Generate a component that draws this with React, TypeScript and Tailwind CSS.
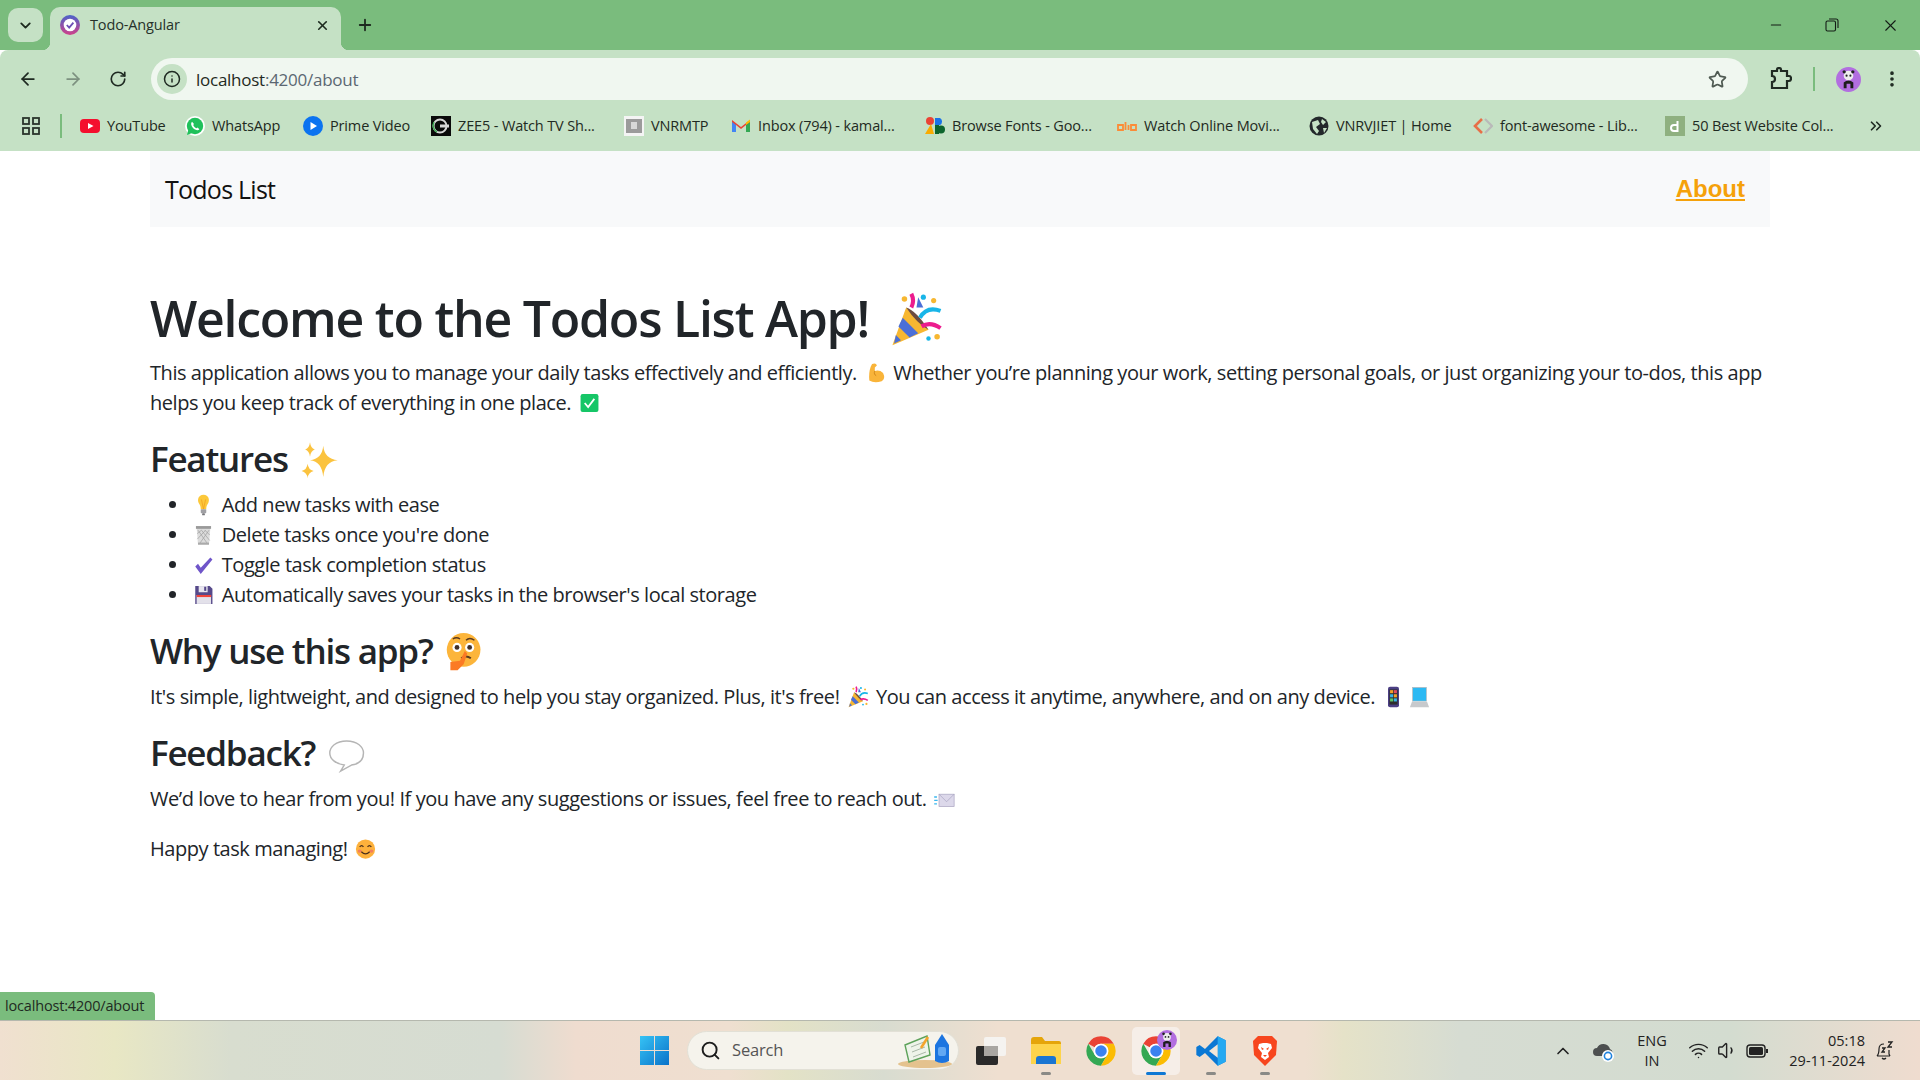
import React from "react";
import { ArrowLeft, ArrowRight, RotateCw, Info, Star, MoreVertical, ChevronDown, X, Plus, Minus, ChevronsRight, Search, ChevronUp, Wifi, Volume1 } from "lucide-react";

const E = ({ children, c = "" }: { children: React.ReactNode; c?: string }) => (
  <svg viewBox="0 0 32 32" className={"inline-block w-[1.35em] h-[1.1em] align-[-0.2em] " + c}>{children}</svg>
);

const Party = () => (
  <E>
    <path d="M11 9 L24 22 L3 31 Z" fill="#f7b731" />
    <path d="M9 15 L18 24 L13 26.5 L6.5 20Z" fill="#4a6fd8" />
    <path d="M5 25 L8 28 L4 30Z" fill="#4a6fd8" />
    <path d="M11 9 Q17 11 24 22 Q17 18 11 9Z" fill="#6d4c41" />
    <path d="M14 9 Q16 5 14 1" stroke="#ec1c8e" strokeWidth="2.4" fill="none" />
    <path d="M19 15 Q23 8 31 11" stroke="#18b5e8" strokeWidth="2.4" fill="none" />
    <path d="M20 20 Q25 17 31 21" stroke="#ec1c8e" strokeWidth="2.4" fill="none" />
    <circle cx="10" cy="4" r="1.6" fill="#f7b731" /><circle cx="21" cy="3" r="1.5" fill="#18b5e8" />
    <circle cx="27" cy="5" r="1.5" fill="#f7b731" /><circle cx="29" cy="26" r="1.6" fill="#f7b731" />
    <circle cx="24" cy="27" r="1.3" fill="#18b5e8" /><path d="M18 3 L21 9 L17 9Z" fill="#4a6fd8" />
  </E>
);
const Muscle = () => (
  <E>
    <path d="M11 3 Q17 1 18 5 L15 8 L15 13 Q22 11 27 16 Q31 24 25 28 Q14 31 7 27 Q6 15 9 7Z" fill="#f9b43a" />
    <path d="M15 13 Q13 18 17 20" stroke="#c97f16" strokeWidth="1.2" fill="none" />
  </E>
);
const GreenCheck = () => (
  <E>
    <rect x="3" y="3" width="26" height="26" rx="3" fill="#16c667" />
    <path d="M9 16 L14 22 L23 10" stroke="#fff" strokeWidth="2.6" fill="none" />
  </E>
);
const Sparkles = () => (
  <E>
    <path d="M19 4 Q20 15 31 16 Q20 17 19 30 Q18 17 8 16 Q18 15 19 4Z" fill="#fbc33f" />
    <path d="M8 1 Q8.6 6 12 7 Q8.6 8 8 13 Q7.4 8 4 7 Q7.4 6 8 1Z" fill="#fbc33f" />
    <path d="M6 19 Q6.6 24 11 25 Q6.6 26 6 31 Q5.4 26 1 25 Q5.4 24 6 19Z" fill="#fbc33f" />
  </E>
);
const Bulb = () => (
  <E>
    <path d="M16 1 C8 1 7 9 9 13 C11 16 12 18 12 22 H20 C20 18 21 16 23 13 C25 9 24 1 16 1Z" fill="#fcc83a" />
    <path d="M13 8 L16 22 L19 8" stroke="#f09a1d" strokeWidth="1" fill="none" />
    <rect x="12" y="22" width="8" height="6" rx="1" fill="#a0a0a4" /><rect x="14" y="28" width="4" height="3" rx="1" fill="#77777b" />
  </E>
);
const Trash = () => (
  <E>
    <path d="M6 5 H26 L24 30 H8Z" fill="#dcdcdc" />
    <path d="M8 9 L22 29 M13 9 L25 24 M18 9 L25 16 M24 9 L10 29 M19 9 L7 22 M13 9 L7 14" stroke="#9d9d9d" strokeWidth="1" />
    <rect x="5" y="3" width="22" height="4" fill="#9a9a9a" /><rect x="8" y="27" width="16" height="3" fill="#aaaaaa" />
  </E>
);
const Tick = () => (
  <E>
    <path d="M4 18 L8 14 L12 20 L26 5 L29 8 L12 29Z" fill="#6f55c9" />
  </E>
);
const Floppy = () => (
  <E>
    <path d="M4 3 H25 L29 7 V29 H4Z" fill="#56498a" />
    <rect x="9" y="3" width="13" height="9" fill="#e8e6ef" /><rect x="17" y="4" width="3" height="6" fill="#56498a" />
    <rect x="6" y="16" width="21" height="13" fill="#e3e1ea" /><rect x="6" y="16" width="21" height="3" fill="#f0433a" />
  </E>
);
const Think = () => (
  <E>
    <circle cx="16" cy="14" r="14" fill="#fcb53b" />
    <circle cx="10.5" cy="12" r="3.8" fill="#fff" /><circle cx="21" cy="12" r="3.8" fill="#fff" />
    <circle cx="10.5" cy="12" r="2" fill="#40302a" /><circle cx="21" cy="12" r="2" fill="#40302a" />
    <path d="M7 5 Q10 3 13 5 M18 6 Q21 3 25 6" stroke="#5a3a20" strokeWidth="1.2" fill="none" />
    <path d="M14 21 Q18 18 22 21" stroke="#5a3a20" strokeWidth="1.6" fill="none" />
    <path d="M5 24 L13 23 L17 15 L19 17 L16 26 L11 31 L5 31Z" fill="#fb7a24" />
  </E>
);
const Phone = () => (
  <E>
    <rect x="8" y="1" width="16" height="30" rx="3" fill="#4b3f84" />
    <rect x="10" y="5" width="12" height="22" fill="#2d2d2d" />
    <rect x="11" y="6" width="4.5" height="4.5" fill="#f3a02c" /><rect x="16.5" y="6" width="4.5" height="4.5" fill="#e34b5f" />
    <rect x="11" y="12" width="4.5" height="4.5" fill="#37b4e8" /><rect x="16.5" y="12" width="4.5" height="4.5" fill="#f3a02c" />
    <rect x="11" y="18" width="4.5" height="4.5" fill="#5ec464" /><rect x="16.5" y="18" width="4.5" height="4.5" fill="#37b4e8" />
  </E>
);
const Laptop = () => (
  <E c="-ml-[6px]">
    <rect x="6" y="2" width="20" height="20" fill="#2cb9f3" stroke="#b5b8bc" strokeWidth="1" />
    <path d="M5 23 H27 L30 31 H2Z" fill="#c7c9cc" />
  </E>
);
const Balloon = () => (
  <E>
    <path d="M16 5 C7 5 2 10 2 15 C2 20 7 24 14 25 L11 30 L20 25 C27 24 30 20 30 15 C30 10 25 5 16 5Z" fill="#fff" stroke="#b5b5b5" strokeWidth="1.2" />
  </E>
);
const Mail = () => (
  <E>
    <rect x="8" y="9" width="22" height="18" fill="#dcd8ea" stroke="#a8a3c0" strokeWidth="1" />
    <path d="M8 9 L19 20 L30 9" stroke="#a8a3c0" strokeWidth="1" fill="none" />
    <path d="M1 13 H5 M1 18 H6 M1 23 H5" stroke="#3ab8ef" strokeWidth="2" />
  </E>
);
const Smile = () => (
  <E>
    <circle cx="16" cy="16" r="14" fill="#fdb13c" />
    <ellipse cx="7.5" cy="19" rx="3" ry="2.4" fill="#f37e5d" /><ellipse cx="24.5" cy="19" rx="3" ry="2.4" fill="#f37e5d" />
    <path d="M7.5 13 Q10.5 9 13 13 M19 13 Q21.5 9 24.5 13" stroke="#4a2f1c" strokeWidth="1.8" fill="none" />
    <path d="M10 20 Q16 26 22 20" stroke="#4a2f1c" strokeWidth="1.8" fill="none" />
  </E>
);

const Fav = ({ children }: { children: React.ReactNode }) => (
  <svg viewBox="0 0 20 20" className="w-5 h-5 shrink-0">{children}</svg>
);

const bookmarks: { w: string; t: string; i: React.ReactNode }[] = [
  { w: "w-[105px]", t: "YouTube", i: <Fav><rect x="0" y="3" width="20" height="14" rx="4" fill="#f40f2e" /><path d="M8 7 L13.5 10 L8 13Z" fill="#fff" /></Fav> },
  { w: "w-[118px]", t: "WhatsApp", i: <Fav><circle cx="10" cy="10" r="10" fill="#fff" /><circle cx="10" cy="10" r="8.2" fill="#20c15b" /><path d="M2 19 L3.5 13 L7 17Z" fill="#20c15b" /><path d="M7 5.8 C5.5 7 6 10 8 12 C10 14 13 15 14.4 13.3 L12.5 11.5 L11.5 12.2 C10 11.6 8.8 10.4 8.2 9 L9 8 Z" fill="#fff" /></Fav> },
  { w: "w-[128px]", t: "Prime Video", i: <Fav><circle cx="10" cy="10" r="10" fill="#0b73f0" /><path d="M7.5 6 L14 10 L7.5 14Z" fill="#fff" /></Fav> },
  { w: "w-[193px]", t: "ZEE5 - Watch TV Sh...", i: <Fav><rect width="20" height="20" fill="#0a0a0a" /><circle cx="9" cy="10" r="6.5" fill="none" stroke="#d8d8d8" strokeWidth="2" /><path d="M3 6 A7.5 7.5 0 0 0 6 16" stroke="#3ca651" strokeWidth="1.5" fill="none" /><rect x="9" y="8.5" width="9" height="3" fill="#d8d8d8" /></Fav> },
  { w: "w-[107px]", t: "VNRMTP", i: <Fav><rect width="20" height="20" fill="#f4f4f4" /><rect x="2" y="3" width="16" height="14" fill="#9b9b9b" /><path d="M7 6 h6 v7 h-6z" fill="#d8d8d8" /></Fav> },
  { w: "w-[194px]", t: "Inbox (794) - kamal...", i: <Fav><path d="M1 4 L10 11 L19 4 V16 H15 V9 L10 13 L5 9 V16 H1Z" fill="#ea4335" /><path d="M1 6 V16 H5 V9Z" fill="#4285f4" /><path d="M15 9 V16 H19 V6Z" fill="#34a853" /><path d="M15 6.5 L19 3.5 V6 L15 9Z" fill="#fbbc04" /></Fav> },
  { w: "w-[192px]", t: "Browse Fonts - Goo...", i: <Fav><circle cx="5" cy="5" r="4" fill="#ea4335" /><path d="M0 18 L6 8 L9 18Z" fill="#f9ab00" /><path d="M10 2 H15 A4 4 0 0 1 15 9 H10Z" fill="#1a73e8" /><path d="M10 9 H14 V18 H10Z" fill="#0d652d" /><circle cx="16" cy="13.5" r="4" fill="#0d652d" /></Fav> },
  { w: "w-[192px]", t: "Watch Online Movi...", i: <Fav><path d="M1 9 H6 V14 H1Z M8.5 6 V14 M11.5 9 V14 M14 9 H19 V14 H14Z" stroke="#fb8c37" strokeWidth="1.8" fill="none" /></Fav> },
  { w: "w-[164px]", t: "VNRVJIET | Home", i: <Fav><circle cx="10" cy="10" r="9.5" fill="#23282b" /><path d="M3 6 L9 4 L11 8 L7 11 L10 15 L8 18 L4 13Z M13 3 L17 6 L14 9 L12 6Z M14 12 L18 12 L15 17Z" fill="#c5e1c5" /></Fav> },
  { w: "w-[192px]", t: "font-awesome - Lib...", i: <Fav><path d="M9 3 L2 10 L9 17" stroke="#e76f47" strokeWidth="2.6" fill="none" /><path d="M12 3 L19 10 L12 17" stroke="#b9b9b9" strokeWidth="2.2" fill="none" /></Fav> },
  { w: "w-[190px]", t: "50 Best Website Col...", i: <Fav><rect width="20" height="20" fill="#8fb080" /><path d="M12.5 5 V15 H9 A3 3 0 1 1 9 9 H12.5" stroke="#fff" strokeWidth="2" fill="none" /></Fav> },
];

const Avatar = ({ c }: { c: string }) => (
  <svg viewBox="0 0 26 26" className={c}>
    <circle cx="13" cy="13" r="13" fill="#b26ee0" />
    <circle cx="13" cy="9" r="5" fill="#eee" />
    <circle cx="8.5" cy="5" r="1.7" fill="#222" /><circle cx="17.5" cy="5" r="1.7" fill="#222" />
    <circle cx="11" cy="9" r="1.1" fill="#222" /><circle cx="15" cy="9" r="1.1" fill="#222" />
    <path d="M8 22 V16 Q13 12 18 16 V22 H15 V17.5 H11 V22Z" fill="#1d1d1d" />
  </svg>
);

const Chrome = ({ c }: { c: string }) => (
  <svg viewBox="0 0 48 48" className={c}>
    <path d="M24 2a22 22 0 0 1 19.05 11H24a11 11 0 0 0-9.53 5.5L4.95 13A22 22 0 0 1 24 2z" fill="#ea4335" />
    <path d="M4.95 13A22 22 0 0 0 24 46l9.53-16.5a11 11 0 0 1-19.06 0z" fill="#34a853" />
    <path d="M43.05 13A22 22 0 0 1 24 46l9.53-16.5A11 11 0 0 0 24 13z" fill="#fbbc04" />
    <circle cx="24" cy="24" r="11" fill="#fff" /><circle cx="24" cy="24" r="8.6" fill="#3b82f0" />
  </svg>
);

const Corner = ({ c }: { c: string }) => <div className={"absolute bottom-0 w-2 h-2 " + c} />;

export default function App() {
  return (
    <div className="w-full h-screen flex flex-col overflow-hidden bg-white font-['Open_Sans',sans-serif] text-[#212529]">
      {/* tab strip */}
      <div className="h-[50px] shrink-0 bg-[#7abc7d] flex items-start relative">
        <div className="ml-2 mt-2 w-[35px] h-[34px] rounded-[10px] bg-[#c5e1c5] flex items-center justify-center">
          <ChevronDown size={17} strokeWidth={2.6} className="text-[#1d2a1f]" />
        </div>
        <div className="relative ml-[7px] mt-[7px] w-[291px] h-[43px] bg-[#c5e1c5] rounded-t-[10px] flex items-center pl-[10px] pr-[12px] pb-[7px]">
          <Corner c="-left-2 bg-[radial-gradient(circle_at_0_0,#7abc7d_8px,#c5e1c5_8.5px)]" />
          <Corner c="-right-2 bg-[radial-gradient(circle_at_100%_0,#7abc7d_8px,#c5e1c5_8.5px)]" />
          <svg viewBox="0 0 20 20" className="w-5 h-5 shrink-0">
            <defs><linearGradient id="fv" x1="0" y1="0" x2="0" y2="1"><stop offset="0" stopColor="#4c63c9" /><stop offset="1" stopColor="#d0418a" /></linearGradient></defs>
            <circle cx="10" cy="10" r="10" fill="url(#fv)" />
            <circle cx="10" cy="10" r="6.3" fill="#fff" />
            <path d="M6.8 10 L9.2 12.6 L13.4 7.6" stroke="#6d4fb5" strokeWidth="1.8" fill="none" />
          </svg>
          <span className="ml-[10px] text-[14.5px] text-[#26312a] tracking-[-0.01em]">Todo-Angular</span>
          <X size={15} strokeWidth={2.6} className="ml-auto -mr-[1px] text-[#1d2a1f]" />
        </div>
        <Plus size={18} strokeWidth={2.4} className="ml-[15px] mt-[16px] text-[#1d2a1f]" />
        <div className="ml-auto flex items-center h-[50px] text-[#141c16]">
          <Minus size={16} strokeWidth={1.6} className="mr-[41px]" />
          <svg viewBox="0 0 14 14" className="w-[14px] h-[14px] mr-[42px]" fill="none" stroke="currentColor" strokeWidth="1.1">
            <rect x="1" y="3" width="9.5" height="10" rx="1.5" /><path d="M4 1 H11 A2 2 0 0 1 13 3 V10" />
          </svg>
          <X size={19} strokeWidth={1.4} className="mr-[20px]" />
        </div>
      </div>

      {/* toolbar */}
      <div className="h-[50px] shrink-0 bg-[#c5e1c5] rounded-t-[8px] pt-[8px] flex items-center text-[#1f2a22]">
        <ArrowLeft size={20} strokeWidth={2.1} className="ml-[18px]" />
        <ArrowRight size={20} strokeWidth={2.1} className="ml-[25px] text-[#7d9180]" />
        <RotateCw size={18} strokeWidth={2.2} className="ml-[26px]" />
        <div className="ml-[24px] w-[1597px] h-[42px] rounded-full bg-[#f0f7f0] flex items-center pl-[6px] pr-[21px]">
          <div className="w-[30px] h-[30px] rounded-full bg-[#c5e1c5] flex items-center justify-center">
            <Info size={18} strokeWidth={2} />
          </div>
          <span className="ml-[9px] mt-[1px] text-[17px] tracking-[-0.015em] text-[#1f2a22]">localhost<span className="text-[#5b6772]">:4200/about</span></span>
          <Star size={19} strokeWidth={2.2} className="ml-auto text-[#4f5a52]" />
        </div>
        <svg viewBox="0 0 24 24" className="w-[24px] h-[24px] ml-[20px]" fill="none" stroke="#1f2a22" strokeWidth="2.2">
          <path d="M4 4 H9 V2.5 Q9 1 11 1 Q13 1 13 2.5 V4 H19 V9 H21 Q23 9 23 11.5 Q23 14 21 14 H19 V21 H4 V15 Q7 15 7 12 Q7 9 4 9Z" />
        </svg>
        <div className="ml-[21px] w-[2px] h-[24px] bg-[#7abc7d]" />
        <Avatar c="w-[25px] h-[25px] ml-[21px]" />
        <MoreVertical size={20} strokeWidth={2.4} className="ml-[21px]" />
      </div>

      {/* bookmarks */}
      <div className="h-[51px] shrink-0 bg-[#c5e1c5] flex items-center text-[14.5px] text-[#1f2a22] tracking-[-0.01em]">
        <svg viewBox="0 0 18 18" className="w-[18px] h-[18px] ml-[22px]" fill="none" stroke="#2a352c" strokeWidth="1.8">
          <rect x="1" y="1" width="6" height="6" /><rect x="11" y="1" width="6" height="6" /><rect x="1" y="11" width="6" height="6" /><rect x="11" y="11" width="6" height="6" />
        </svg>
        <div className="ml-[20px] w-[2px] h-[24px] bg-[#7abc7d] mr-[18px]" />
        {bookmarks.map((b) => (
          <div key={b.t} className={"flex items-center gap-[7px] whitespace-nowrap shrink-0 " + b.w}>
            {b.i}
            <span>{b.t}</span>
          </div>
        ))}
        <ChevronsRight size={18} strokeWidth={2.2} className="ml-[12px]" />
      </div>

      {/* page */}
      <div className="flex-1 relative">
        <div className="mx-[150px]">
          <nav className="h-[76px] bg-[#f8f9fa] flex items-center justify-between pl-[15px] pr-[25px]">
            <span className="mt-[2px] text-[25px] text-[#111] tracking-[-0.03em]">Todos List</span>
            <a className="font-['Liberation_Sans',sans-serif] font-bold text-[24px] text-[#f5a10a] underline">About</a>
          </nav>
          <div className="mt-[61px] text-[20px] leading-[30px] tracking-[-0.022em]">
            <h1 className="text-[50px] leading-[60px] font-semibold tracking-[-0.025em] mb-[10px]">Welcome to the Todos List App! <Party /></h1>
            <p className="mb-[17px]">This application allows you to manage your daily tasks effectively and efficiently. <Muscle /> Whether you’re planning your work, setting personal goals, or just organizing your to-dos, this app helps you keep track of everything in one place. <GreenCheck /></p>
            <h2 className="text-[35px] leading-[48px] font-semibold tracking-[-0.035em] mb-[7px]">Features <Sparkles /></h2>
            <ul className="list-disc pl-10 mb-[17px]">
              <li><Bulb /> Add new tasks with ease</li>
              <li><Trash /> Delete tasks once you're done</li>
              <li><Tick /> Toggle task completion status</li>
              <li><Floppy /> Automatically saves your tasks in the browser's local storage</li>
            </ul>
            <h2 className="text-[35px] leading-[48px] font-semibold tracking-[-0.035em] mb-[7px]">Why use this app? <Think /></h2>
            <p className="mb-[17px]">It's simple, lightweight, and designed to help you stay organized. Plus, it's free! <Party /> You can access it anytime, anywhere, and on any device. <Phone /> <Laptop /></p>
            <h2 className="text-[35px] leading-[48px] font-semibold tracking-[-0.035em] mb-[7px]">Feedback? <Balloon /></h2>
            <p className="mb-[20px]">We’d love to hear from you! If you have any suggestions or issues, feel free to reach out. <Mail /></p>
            <p>Happy task managing! <Smile /></p>
          </div>
        </div>
        <div className="absolute left-0 bottom-0 w-[155px] h-[28px] bg-[#7abc7d] rounded-tr-[4px] pl-[5px] text-[14.5px] leading-[28px] text-[#1f2a22] tracking-[-0.012em]">localhost:4200/about</div>
      </div>

      {/* taskbar */}
      <div className="h-[60px] shrink-0 border-t border-[#b5b8ae] flex items-center bg-[linear-gradient(90deg,#f0e0d0_0%,#e8e7c4_6%,#d8ddcf_12%,#d6dcd2_26%,#efdccf_30%,#efdfd0_38%,#e3e2c6_41%,#d8dcd0_46%,#efdfd0_52%,#efdfd0_68%,#e5e2c8_70%,#d6dcd2_76%,#d3dcd0_90%,#efdccf_100%)]">
        <svg viewBox="0 0 29 29" className="w-[29px] h-[29px] ml-[640px] shrink-0">
          <defs><linearGradient id="win" x1="0" y1="0" x2="1" y2="1"><stop offset="0" stopColor="#36c3f5" /><stop offset="1" stopColor="#0a72c9" /></linearGradient></defs>
          <path d="M0 0 H14 V14 H0Z M15 0 H29 V14 H15Z M0 15 H14 V29 H0Z M15 15 H29 V29 H15Z" fill="url(#win)" />
        </svg>
        <div className="ml-[18px] w-[272px] h-[39px] rounded-full bg-[#f5f3ec] border border-[#e2e0d6] flex items-center pl-[12px] pr-[3px] shrink-0">
          <Search size={21} strokeWidth={2.2} className="text-[#1d1d1d]" />
          <span className="ml-[11px] text-[16.5px] text-[#555] tracking-[-0.01em]">Search</span>
          <svg viewBox="0 0 58 36" className="ml-auto w-[58px] h-[36px]">
            <ellipse cx="28" cy="31" rx="27" ry="4" fill="#e4c28e" />
            <path d="M8 12 L30 3 L33 22 L12 29Z" fill="#eef4ea" stroke="#5da25a" strokeWidth="1.4" />
            <path d="M14 14 L27 9 M15 19 L28 14 M16 24 L29 19" stroke="#a9b8a8" strokeWidth="1" />
            <path d="M24 15 L31 4" stroke="#f4a42c" strokeWidth="2.6" />
            <path d="M38 12 L45 1 L52 12 V28 Q45 32 38 28Z" fill="#1c75e0" />
            <rect x="41" y="14" width="8" height="9" rx="2" fill="#62a8f3" />
          </svg>
        </div>
        <svg viewBox="0 0 30 28" className="w-[30px] h-[28px] ml-[17px] shrink-0">
          <rect x="0" y="9" width="22" height="19" rx="2" fill="#2a2a2a" />
          <rect x="8" y="0" width="22" height="19" rx="2" fill="#f5f3f0" />
          <rect x="8" y="9" width="14" height="10" fill="#a9a6a2" />
        </svg>
        <div className="relative ml-[25px] w-[30px] h-[48px] flex items-center shrink-0">
          <svg viewBox="0 0 30 27" className="w-[30px] h-[27px]">
            <path d="M0 3 Q0 0 3 0 H11 L14 4 H28 Q30 4 30 6 V27 H0Z" fill="#e5a50a" />
            <path d="M0 7 H30 V27 H0Z" fill="#fdd44b" />
            <path d="M5 27 V22 Q5 19 8 19 H22 Q25 19 25 22 V27Z" fill="#1a76d2" />
          </svg>
          <div className="absolute bottom-0 left-[10px] w-[10px] h-[3px] rounded-full bg-[#8a8a86]" />
        </div>
        <Chrome c="w-[32px] h-[32px] ml-[24px] shrink-0" />
        <div className="relative ml-[15px] w-[48px] h-[48px] rounded-[5px] bg-[#f6eee8] flex items-center justify-center shrink-0">
          <Chrome c="w-[32px] h-[32px]" />
          <Avatar c="absolute top-[3px] right-[3px] w-[20px] h-[20px]" />
          <div className="absolute bottom-0 left-[14px] w-[20px] h-[3px] rounded-full bg-[#0f78d4]" />
        </div>
        <div className="relative ml-[15px] w-[32px] h-[48px] flex items-center shrink-0">
          <svg viewBox="0 0 48 48" className="w-[32px] h-[32px]">
            <path d="M34 2 L46 8 V40 L34 46 L15 27 L7 33 L2 30 V18 L7 15 L15 21Z" fill="#0a78d4" />
            <path d="M34 2 L46 8 V40 L34 46Z" fill="#25a9f2" />
            <path d="M34 14 L21 24 L34 34Z" fill="#f0e6d8" />
          </svg>
          <div className="absolute bottom-0 left-[11px] w-[10px] h-[3px] rounded-full bg-[#8a8a86]" />
        </div>
        <div className="relative ml-[24px] w-[28px] h-[48px] flex items-center shrink-0">
          <svg viewBox="0 0 28 32" className="w-[28px] h-[32px]">
            <path d="M7 1 H21 L26 6 L25 20 L14 31 L3 20 L2 6Z" fill="#f7461e" />
            <path d="M8 9 L12 8 H16 L20 9 L21 13 L17 18 L18 22 L14 25 L10 22 L11 18 L7 13Z" fill="#fff" />
            <path d="M10 12 L13 14 L11 15Z M18 12 L15 14 L17 15Z M12 20 H16 L14 22Z" fill="#f7461e" />
          </svg>
          <div className="absolute bottom-0 left-[9px] w-[10px] h-[3px] rounded-full bg-[#8a8a86]" />
        </div>
        <ChevronUp size={20} strokeWidth={2} className="ml-[274px] text-[#222] shrink-0" />
        <svg viewBox="0 0 22 22" className="w-[22px] h-[22px] ml-[20px] shrink-0">
          <path d="M4 16 A4 4 0 0 1 4 8 A7 7 0 0 1 17 9 A4 4 0 0 1 18 16Z" fill="#4d5050" />
          <circle cx="15" cy="16" r="6" fill="#fff" /><circle cx="15" cy="16" r="3.6" fill="none" stroke="#1f83dd" strokeWidth="1.6" />
        </svg>
        <div className="ml-[22px] w-[30px] flex flex-col items-center text-[14.5px] leading-[20px] text-[#222] shrink-0">
          <span>ENG</span><span>IN</span>
        </div>
        <Wifi size={21} strokeWidth={1.7} className="ml-[21px] text-[#222] shrink-0" />
        <Volume1 size={21} strokeWidth={1.6} className="ml-[8px] text-[#222] shrink-0" />
        <svg viewBox="0 0 22 14" className="w-[22px] h-[14px] ml-[8px] shrink-0">
          <rect x="1" y="1" width="18" height="12" rx="3" fill="none" stroke="#222" strokeWidth="1.4" />
          <rect x="3" y="3" width="14" height="8" rx="1.5" fill="#222" /><rect x="20" y="5" width="2" height="4" fill="#222" />
        </svg>
        <div className="ml-[12px] w-[85px] flex flex-col items-end text-[14.5px] leading-[20px] text-[#222] shrink-0">
          <span>05:18</span><span>29-11-2024</span>
        </div>
        <svg viewBox="0 0 20 20" className="w-[20px] h-[20px] ml-[9px] shrink-0" fill="none" stroke="#222" strokeWidth="1.2">
          <path d="M3 15 Q5 13 5 8 Q5 3 10 3 M3 15 H16 M8 17 Q10 19 12 17 M15 9 V13 L16 15" />
          <path d="M8 7 H11 L8 11 H11 M14 1 H18 L14 6 H18" strokeWidth="1.3" />
        </svg>
      </div>
    </div>
  );
}
